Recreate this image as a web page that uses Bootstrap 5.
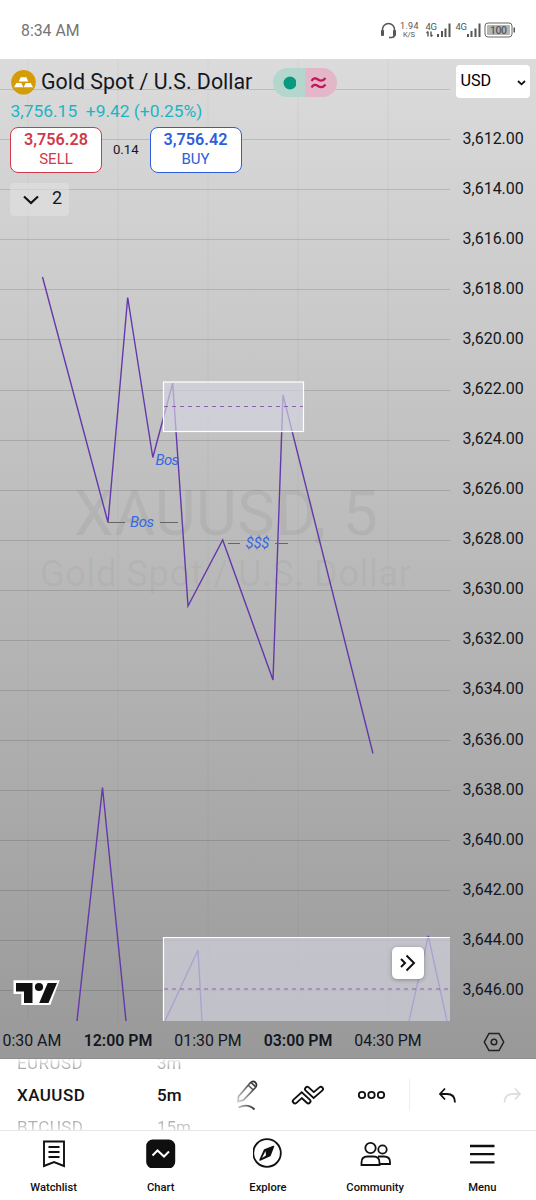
<!DOCTYPE html>
<html lang="en">
<head>
<meta charset="utf-8">
<meta name="viewport" content="width=device-width, initial-scale=1">
<title>Gold Spot / U.S. Dollar</title>
<link href="https://cdn.jsdelivr.net/npm/bootstrap@5.3.0/dist/css/bootstrap.min.css" rel="stylesheet">
<style>
  body { font-family: Roboto, "Liberation Sans", sans-serif; color: #131722; width: 536px; height: 1200px; overflow: hidden; line-height: 1.2; background: #fff; }
  svg { display: block; flex: none; }
  .statusbar { height: 59px; padding: 3px 21px 0 21px; color: #757575; font-size: 15.8px; }
  .chart-area { height: 1000px; display: grid; grid-template: 962px 38px / 451px 85px; background: linear-gradient(#dbdbdb, #999); border-bottom: 1px solid #8d8d8d; }
  .plot-cell { position: relative; }
  .legend-box { position: absolute; left: 10px; top: 9px; }
  .sym { font-size: 21.4px; line-height: 27px; margin: -2px 0 0 5px; width: 212px; white-space: nowrap; color: #15171f; }
  .pill { width: 64px; height: 29px; overflow: hidden; margin-left: 20px; }
  .pill-open { background: #b4d6cd; width: 32px; }
  .pill-approx { background: #e3b6c8; width: 32px; }
  .change { color: #1cb4c4; font-size: 17.4px; line-height: 22px; margin: 3px 0 0 .5px; }
  .trade { width: 92px; height: 46px; border-radius: 8px; background: #fff; border: 1px solid; font-size: 15px; line-height: 19.5px; padding: 2px 0 0; text-align: center; }
  .trade strong { font-weight: 600; font-size: 16.2px; display: block; }
  .sell { color: #d03a4b; } .buy { color: #2e5ddb; }
  .spread { width: 47.5px; font-size: 13.2px; text-align: center; }
  .collapse-btn { width: 59px; height: 33px; margin-top: 10px; border-radius: 4px; background: rgba(225,225,225,.6); font-size: 18px; padding: 0 7px 4px 12px; }
  .jump { position: absolute; right: 27.5px; bottom: 42px; width: 32px; height: 32px; background: #fff; border-radius: 5px; box-shadow: 0 1px 4px rgba(0,0,0,.3); }
  .tv-mark { position: absolute; left: 12px; top: 919px; }
  .currency { width: 74px; height: 33px; margin: 6px 0 0 5px; background: #fff; border-radius: 4px; font-size: 16.2px; padding: 0 4px 1px 4.5px; color: #000; }
  .prices { margin-top: 15.6px; }
  .prices div { height: 50.09px; padding-left: 11.5px; font-size: 16px; line-height: 50.09px; }
  .times { font-size: 15.9px; width: 451px; padding-top: 1px; }
  .times div { flex: none; width: 90px; text-align: center; white-space: nowrap; }
  .times div:first-child { width: 73px; text-align: left; padding-left: 2.5px; }
  .times .hour { font-weight: 600; }
  .tools { height: 72px; border-bottom: 1px solid #e6e6e6; }
  .wheel { height: 71px; overflow: hidden; font-size: 17px; padding-left: 17px; width: 140px; letter-spacing: .45px; }
  .wheel.interval { width: 90px; letter-spacing: 0; }
  .wheel div { height: 32px; line-height: 32px; color: #999; }
  .wheel div:first-child { margin-top: -12px; -webkit-mask-image: linear-gradient(transparent 30%, #000 75%); }
  .wheel div:last-child { -webkit-mask-image: linear-gradient(#000 20%, transparent 80%); }
  .wheel .now { color: #131313; font-weight: 500; }
  .tabs-row { height: 69px; font-size: 11.2px; font-weight: 500; color: #0f0f0f; }
  .tabs-row > div { width: 107.2px; padding-top: 7px; }
  .tabs-row svg { margin-bottom: 12.5px; }
</style>
</head>
<body>
<header class="statusbar d-flex align-items-center justify-content-between">
  <span>8:34 AM</span>
  <svg width="136" height="24" viewBox="379 18.5 136 24" fill="#555" font-family="Roboto, sans-serif">
    <path d="M382.500 31V29a6 6 0 0 1 12 0v2M394.500 33v1.500q0 2.500-3 2.500h-2.500" fill="none" stroke="#555" stroke-width="1.500"/>
    <rect x="381" y="29.500" width="3" height="6" rx="1"/><rect x="393" y="29.500" width="3" height="6" rx="1"/>
    <text x="400" y="28.500" font-size="9" textLength="18.500">1.94</text>
    <text x="403" y="36" font-size="7.500" textLength="12">K/S</text>
    <text x="425.500" y="29" font-size="9.500" textLength="11.500">4G</text>
    <path d="M428 36v-5m-1.500 1.500l1.500-1.500M431 31v5m1.500-1.500l-1.500 1.500" fill="none" stroke="#555" stroke-width="1.400"/>
    <path d="M437 33.500h2v3h-2zM441 30.500h2v6h-2zM444.500 28h2v8.500h-2zM448.500 23h2v13.500h-2z"/>
    <text x="455.500" y="29" font-size="9.500" textLength="11.500">4G</text>
    <path d="M467 33.500h2v3h-2zM470.500 30.500h2v6h-2zM474.500 28h2v8.500h-2zM478.500 23h2v13.500h-2z"/>
    <rect x="485" y="22.500" width="27" height="14" rx="3" fill="#fff" stroke="#666"/>
    <rect x="487" y="24.500" width="23" height="10" rx="1" fill="#b5b5b5"/>
    <rect x="513.500" y="27" width="1.500" height="5"/>
    <text x="490" y="33.300" font-size="10.500" font-weight="500" textLength="17">100</text>
  </svg>
</header>

<main class="chart-area">
  <section class="plot-cell">
    <svg width="451" height="962" viewBox="0 59 451 962" font-family="Roboto, sans-serif">
      <path d="M28 59V1021M118 59V1021M208 59V1021M298 59V1021M388 59V1021" stroke="#000" stroke-opacity=".035"/>
      <path stroke="#000" stroke-opacity=".13" d="M0 89.500H450M0 139.500H450M0 189.500H450M0 239.500H450M0 289.500H450M0 339.500H450M0 390.500H450M0 440.500H450M0 490.500H450M0 540.500H450M0 590.500H450M0 640.500H450M0 690.500H450M0 740.500H450M0 790.500H450M0 840.500H450M0 890.500H450M0 940.500H450M0 990.500H450"/>
      <g fill="#000" fill-opacity=".05">
        <text x="74" y="535" font-size="63" textLength="304">XAUUSD, 5</text>
        <text x="40" y="586" font-size="36" textLength="371">Gold Spot / U.S. Dollar</text>
      </g>
      <g fill="none" stroke="#6438ac" stroke-width="1.400">
        <path d="M42.500 277L108 522.500L127.700 297.500L152.800 457.500L172.700 383L188 606L222.700 540L273 680L283 395L373 753.500"/>
        <path d="M77 1021L102.500 787.500L126 1021"/>
        <path d="M165 1021L198 950L202 1021M409 1021L428.300 936L447 1021"/>
      </g>
      <path d="M108 522.500H125M160 522.500H178M228 543.500H240M275 543.500H288" stroke="#666"/>
      <g fill="#d5d6e0" fill-opacity=".66" stroke="#fff" stroke-width="1.200">
        <rect x="163.500" y="382" width="140" height="49.500"/>
        <path d="M163.500 1022V937.500H450V1022" stroke="none"/>
        <path d="M163.500 1022V937.500H450" fill="none"/>
      </g>
      <path d="M164 406.500H303M164 989H450" stroke="#8544a3" stroke-opacity=".8" stroke-width="1.200" stroke-dasharray="4 4"/>
      <g fill="#3568e2" font-size="15" font-style="italic">
        <text x="155.500" y="464.500" textLength="23.500">Bos</text>
        <text x="130" y="527" textLength="24">Bos</text>
        <text x="245.500" y="548" textLength="24">$$$</text>
      </g>
    </svg>

    <div class="legend-box">
      <div class="d-flex align-items-center">
        <svg width="26" height="29" viewBox="0 0 26 29"><circle cx="13.500" cy="14.300" r="12.300" fill="#d49c08"/><path d="M10.700 9.300h5.600l2 4.300h-9.600zM6.300 15h5l2 4.300h-9.300zM15.700 15h5l2.300 4.300h-9.300z" fill="#fff"/></svg>
        <div class="sym">Gold Spot / U.S. Dollar</div>
        <div class="pill d-flex rounded-pill">
          <div class="pill-open d-flex align-items-center justify-content-center"><svg width="14" height="14"><circle cx="8" cy="7" r="6.500" fill="#089981"/></svg></div>
          <div class="pill-approx d-flex align-items-center"><svg class="ms-1" width="20" height="14" viewBox="0 0 20 14" fill="none" stroke="#c2185b" stroke-width="2.200"><path d="M2.500 5Q5 .5 9 3.500T16.500 2M2.500 11.500Q5 7 9 10T16.500 8.500"/></svg></div>
        </div>
      </div>
      <div class="change">3,756.15 &nbsp;+9.42 (+0.25%)</div>
      <div class="d-flex align-items-center mt-1 pt-1">
        <div class="trade sell" style="margin-top:-3px"><strong>3,756.28</strong>SELL</div>
        <div class="spread" style="margin-top:-3px">0.14</div>
        <div class="trade buy" style="margin-top:-3px"><strong>3,756.42</strong>BUY</div>
      </div>
      <div class="collapse-btn d-flex align-items-center justify-content-between">
        <svg width="18" height="12" viewBox="0 0 18 12" class="mt-1"><path d="M2 2.500l7 6.500L16 2.500" fill="none" stroke="#111" stroke-width="2.200"/></svg><span>2</span>
      </div>
    </div>

    <svg class="tv-mark" width="50" height="28" viewBox="12 978 50 28">
      <path d="M13.500 980.300H59.700L50.300 1005H21.300V994H13.500z" fill="#fff"/>
      <path d="M16 983H32.500V1003H24V991.500H16zM47.700 983H57L48.500 1003H39.200z" fill="#111"/><circle cx="39" cy="987" r="4.100" fill="#111"/>
    </svg>
    <div class="jump d-flex align-items-center justify-content-center">
      <svg width="16" height="18" viewBox="0 0 16 18" fill="none" stroke="#111" stroke-width="2"><path d="M1 5l4 4-4 4M6.500 1.500L14 9l-7.500 7.500"/></svg>
    </div>
  </section>

  <aside>
    <div class="currency d-flex align-items-center justify-content-between"><span>USD</span><svg width="9" height="7" viewBox="0 0 9 7" class="mt-1"><path d="M1 1l3.500 3.300L8 1" fill="none" stroke="#111" stroke-width="1.800"/></svg></div>
    <div class="prices">
      <div>3,612.00</div><div>3,614.00</div><div>3,616.00</div><div>3,618.00</div><div>3,620.00</div><div>3,622.00</div>
      <div>3,624.00</div><div>3,626.00</div><div>3,628.00</div><div>3,630.00</div><div>3,632.00</div><div>3,634.00</div>
      <div>3,636.00</div><div>3,638.00</div><div>3,640.00</div><div>3,642.00</div><div>3,644.00</div><div>3,646.00</div>
    </div>
  </aside>

  <div class="times d-flex align-items-center">
    <div>0:30 AM</div><div class="hour">12:00 PM</div><div>01:30 PM</div><div class="hour">03:00 PM</div><div>04:30 PM</div>
  </div>
  <div class="d-flex align-items-center justify-content-center pt-1">
    <svg width="22" height="20" viewBox="0 0 22 20" fill="none" stroke="#222" stroke-width="1.500"><path d="M6 1.500h10l4.700 8.500L16 18.500H6L1.300 10z"/><circle cx="11" cy="10" r="2.800"/></svg>
  </div>
</main>

<section class="tools d-flex align-items-center">
  <div class="wheel"><div>EURUSD</div><div class="now">XAUUSD</div><div>BTCUSD</div></div>
  <div class="wheel interval"><div>3m</div><div class="now">5m</div><div>15m</div></div>
  <svg width="306" height="71" viewBox="230 1059 306 71" fill="none" stroke="#111" stroke-width="1.800">
    <defs><linearGradient id="ink" x1="0" y1="1" x2="1" y2="0"><stop offset="0" stop-color="#ccc"/><stop offset="1" stop-color="#222"/></linearGradient><linearGradient id="ink2"><stop offset="0" stop-color="#bbb"/><stop offset="1" stop-color="#333"/></linearGradient></defs>
    <path d="M238.500 1096.500L250.500 1082.500Q253 1080 255.500 1082.500Q257.500 1085 255.500 1087.500L243.500 1100L238 1101.500zM248 1085L253.300 1090M250.800 1082.300L255.800 1087" stroke="url(#ink)" stroke-width="1.700"/>
    <path d="M238.500 1107.500Q248 1103 254.500 1109.500" stroke="url(#ink2)" stroke-width="1.900"/>
    <path d="M295 1101.200L301.700 1095.200L308.300 1101.200M307.200 1089L313.700 1095L320.800 1089" stroke-width="6.200" stroke-linecap="round"/>
    <path d="M295 1101.200L301.700 1095.200L308.300 1101.200M307.200 1089L313.700 1095L320.800 1089" stroke="#fff" stroke-width="2.500" stroke-linecap="round"/>
    <circle cx="362" cy="1095" r="3.200"/><circle cx="371.500" cy="1095" r="3.200"/><circle cx="381" cy="1095" r="3.200"/>
    <path d="M409.500 1079V1111" stroke="#eee" stroke-width="1"/>
    <path d="M445 1088.500L440 1094L445 1099.500M440 1094H447Q455 1094 455 1102.500"/>
    <path d="M515 1088.500L520 1094L515 1099.500M520 1094H513Q504.500 1094 504.500 1102.500" stroke="#dedede"/>
  </svg>
</section>

<nav class="tabs-row d-flex">
  <div class="d-flex flex-column align-items-center"><svg width="30" height="30" viewBox="0 0 30 30" fill="none" stroke="#111" stroke-width="1.900"><path d="M5 3.500H25V28L15 24L5 28zM9.500 9H20.500M9.500 14H20.500M9.500 19H20.500"/></svg>Watchlist</div>
  <div class="d-flex flex-column align-items-center"><svg width="30" height="30" viewBox="0 0 30 30"><rect x=".2" y="1.500" width="29" height="29" rx="6.500" fill="#0f0f0f"/><path d="M6.500 17.500L11.500 12.500L18 18.500L23 13.500" fill="none" stroke="#fff" stroke-width="2"/></svg>Chart</div>
  <div class="d-flex flex-column align-items-center"><svg width="30" height="30" viewBox="0 0 30 30"><circle cx="14" cy="15" r="13.800" fill="none" stroke="#111" stroke-width="1.800"/><path d="M20.500 8.500L11.500 12L7 22L17 17.500z" fill="#111" stroke="#111" stroke-width="1.500" stroke-linejoin="round"/><path d="M12.500 13L9 20L13 17.500z" fill="#fff"/></svg>Explore</div>
  <div class="d-flex flex-column align-items-center"><svg width="32" height="30" viewBox="0 0 32 30" fill="none" stroke="#111" stroke-width="1.800"><circle cx="11.500" cy="10" r="5.200"/><circle cx="23.500" cy="11.500" r="4.200"/><path d="M2.500 27V24.500Q2.500 18.500 8.500 18.500H14.500Q20.500 18.500 20.500 24.500V27zM19 18.500H25Q31 18.500 31 24V26H21"/></svg>Community</div>
  <div class="d-flex flex-column align-items-center"><svg width="30" height="30" viewBox="0 0 30 30"><path d="M3 8H27.500M3 16.200H27.500M3 24.300H27.500" stroke="#0f0f0f" stroke-width="2.300"/></svg>Menu</div>
</nav>
<script src="https://cdn.jsdelivr.net/npm/bootstrap@5.3.0/dist/js/bootstrap.bundle.min.js"></script>
</body>
</html>
